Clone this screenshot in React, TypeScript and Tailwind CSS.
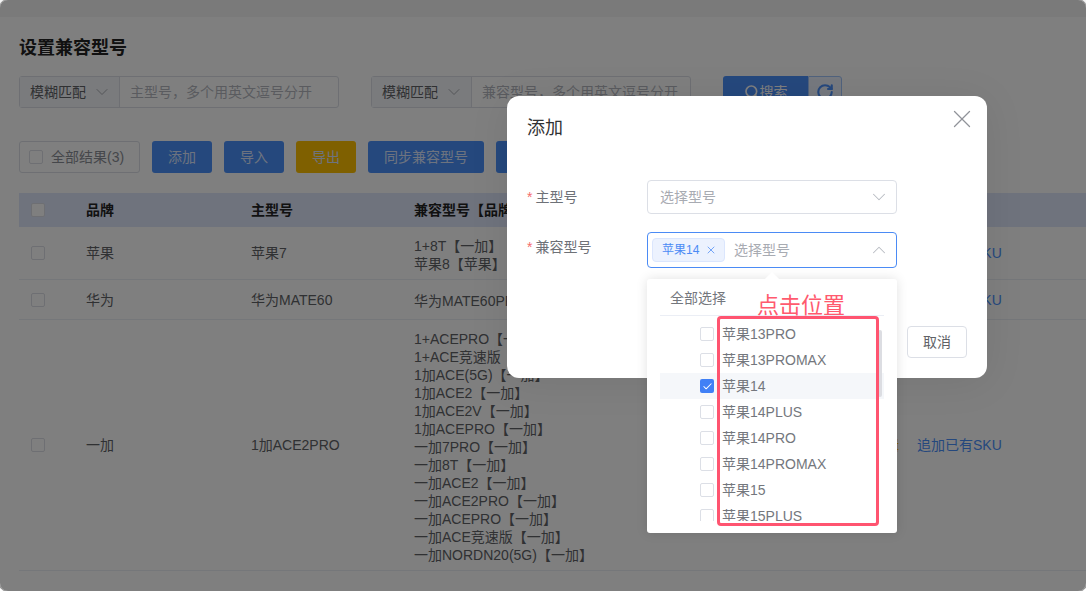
import React from "react";
import { ChevronDown, ChevronUp, X, Search, RotateCw, Check } from "lucide-react";

const rows = [
  { brand: "苹果", main: "苹果7", compat: ["1+8T【一加】", "苹果8【苹果】"], h: "h-[53px]" },
  { brand: "华为", main: "华为MATE60", compat: ["华为MATE60PRO【华为】"], h: "h-[40px]" },
  {
    brand: "一加",
    main: "1加ACE2PRO",
    compat: [
      "1+ACEPRO【一加】",
      "1+ACE竞速版【一加】",
      "1加ACE(5G)【一加】",
      "1加ACE2【一加】",
      "1加ACE2V【一加】",
      "1加ACEPRO【一加】",
      "一加7PRO【一加】",
      "一加8T【一加】",
      "一加ACE2【一加】",
      "一加ACE2PRO【一加】",
      "一加ACEPRO【一加】",
      "一加ACE竞速版【一加】",
      "一加NORDN20(5G)【一加】",
    ],
    h: "h-[251px]",
  },
];

const options = ["苹果13PRO", "苹果13PROMAX", "苹果14", "苹果14PLUS", "苹果14PRO", "苹果14PROMAX", "苹果15", "苹果15PLUS"];

function Box({ className = "" }: { className?: string }) {
  return <span className={`block w-[14px] h-[14px] shrink-0 rounded-[2px] border border-[#dcdfe6] bg-white ${className}`} />;
}

function MatchFilter({ placeholder }: { placeholder: string }) {
  return (
    <div className="flex h-8 w-[320px] rounded-[3px] border border-[#dcdfe6] text-sm">
      <div className="flex w-[100px] shrink-0 items-center justify-between border-r border-[#dcdfe6] bg-[#f5f7fa] pl-[10px] pr-[7px] text-[#606266]">
        模糊匹配
        <ChevronDown size={20} strokeWidth={1.2} className="text-[#a8abb2]" />
      </div>
      <div className="flex flex-1 items-center overflow-hidden whitespace-nowrap pl-[10px] text-[#b4b7bf]">{placeholder}</div>
    </div>
  );
}

function ToolButton({ label, color = "bg-[#4b90fb]", width }: { label: string; color?: string; width: string }) {
  return <button className={`flex h-8 items-center justify-center rounded-[3px] text-sm text-[#dbe7ff] ${color} ${width}`}>{label}</button>;
}

export default function App() {
  return (
    <div
      className="relative h-[591px] w-[1086px] overflow-hidden bg-white text-sm text-[#606266]"
      style={{ fontFamily: '"Liberation Sans", "Noto Sans CJK SC", sans-serif' }}
    >
      {/* Page behind the dialog */}
      <div className="h-[17px] bg-[#f4f4f4]" />
      <div className="pl-[19px]">
        <h1 className="mt-[20px] h-[22px] text-lg leading-[22px] font-bold text-[#222]">设置兼容型号</h1>
        <div className="mt-[17px] flex items-start">
          <MatchFilter placeholder="主型号，多个用英文逗号分开" />
          <div className="ml-8">
            <MatchFilter placeholder="兼容型号，多个用英文逗号分开" />
          </div>
          <div className="ml-8 flex h-8">
            <button className="flex w-[85px] items-center justify-center rounded-l-[3px] bg-[#4b90fb] text-sm text-white">
              <Search size={16} strokeWidth={2.5} />
              搜索
            </button>
            <button className="flex w-[34px] items-center justify-center rounded-r-[3px] border border-[#a0c4fb] bg-[#ecf3ff] text-[#4b90fb]">
              <RotateCw size={18} strokeWidth={2.8} />
            </button>
          </div>
        </div>
        <div className="mt-[33px] flex gap-3">
          <div className="flex h-8 w-[121px] items-center gap-2 rounded-[3px] border border-[#dcdfe6] pl-[9px] text-sm text-[#8b8e96]">
            <Box />
            全部结果(3)
          </div>
          <ToolButton label="添加" width="w-[60px]" />
          <ToolButton label="导入" width="w-[60px]" />
          <ToolButton label="导出" width="w-[60px]" color="bg-[#ffc000]" />
          <ToolButton label="同步兼容型号" width="w-[116px]" />
          <ToolButton label="批量删除" width="w-[90px]" />
        </div>

        <div className="mt-5">
          <div className="flex h-[34px] items-center bg-[#dfe6fa] font-bold text-[#222]">
            <div className="w-[67px] pl-3">
              <Box />
            </div>
            <div className="w-[165px]">品牌</div>
            <div className="w-[163px]">主型号</div>
            <div>兼容型号【品牌】</div>
          </div>
          {rows.map((row) => (
            <div key={row.brand} className={`flex items-center border-b border-[#ebeef5] ${row.h}`}>
              <div className="w-[67px] pl-3">
                <Box />
              </div>
              <div className="w-[165px]">{row.brand}</div>
              <div className="w-[163px]">{row.main}</div>
              <div className="w-[457px] pt-[3px] leading-[18px]">
                {row.compat.map((line) => (
                  <div key={line}>{line}</div>
                ))}
              </div>
              <div className="flex gap-[18px] whitespace-nowrap">
                <span className="text-[#ffc000]">编辑</span>
                <span className="text-[#4b90fb]">追加已有SKU</span>
              </div>
            </div>
          ))}
        </div>
      </div>

      {/* Overlay */}
      <div className="absolute inset-0 rounded-lg bg-black/50 ring-1 ring-[#9a9a9a]" />

      {/* Dialog */}
      <div className="absolute left-[507px] top-[96px] h-[282px] w-[480px] rounded-xl bg-white shadow-[0_4px_40px_rgba(0,0,0,0.08)]">
        <div className="flex items-start justify-between pl-5 pr-[10px] pt-[16px]">
          <h2 className="text-lg leading-[32px] text-[#303133]">添加</h2>
          <X size={30} strokeWidth={1} className="-mt-[8px] text-[#909399]" />
        </div>
        <div className="mt-[36px] flex flex-col gap-[18px] pl-5">
          <div className="flex h-[34px] items-center">
            <label className="w-[120px] text-[#6e7177]">
              <span className="mr-[3px] text-[#f56c6c]">*</span>主型号
            </label>
            <div className="flex h-[34px] w-[250px] items-center justify-between rounded border border-[#dcdfe6] pl-3 pr-[6px] text-[#a8abb2]">
              选择型号
              <ChevronDown size={22} strokeWidth={1.1} className="text-[#b8bbc2]" />
            </div>
          </div>
          <div className="flex items-start">
            <label className="w-[120px] pt-[5px] text-[#6e7177]">
              <span className="mr-[3px] text-[#f56c6c]">*</span>兼容型号
            </label>
            <div className="flex h-9 w-[250px] items-center rounded border border-[#4b8bf5] pl-[4px] pr-[6px] text-[#a8abb2]">
              <span className="flex h-6 w-[73px] items-center gap-[6px] rounded border border-[#dbe6fd] bg-[#ecf2fe] pl-[9px] text-xs text-[#4b8bf5]">
                苹果14
                <X size={12} strokeWidth={1.5} />
              </span>
              <span className="ml-[9px] flex-1">选择型号</span>
              <ChevronUp size={22} strokeWidth={1.1} className="text-[#b8bbc2]" />
            </div>
          </div>
        </div>
        <button className="absolute right-5 top-[230px] h-8 w-[60px] rounded border border-[#dcdfe6] bg-white text-sm text-[#606266]">取消</button>
      </div>

      {/* Dropdown */}
      <div className="absolute left-[647px] top-[279px] h-[254px] w-[250px] rounded-[3px] bg-white pl-[13px] pr-[13px] text-[#74777d] shadow-[0_0_12px_rgba(0,0,0,0.12)]">
        <span className="absolute -top-[5px] left-[120px] h-[10px] w-[10px] rotate-45 bg-white" />
        <div className="relative h-[37px] border-b border-[#ebeef5] pl-[10px] pt-[10px] leading-[18px]">全部选择</div>
        <div className="relative mt-[5px] h-[200px] overflow-hidden">
          {options.map((opt) => {
            const on = opt === "苹果14";
            return (
              <div key={opt} className={`flex h-[26px] items-center gap-2 pl-[40px] ${on ? "bg-[#f5f7fa]" : ""}`}>
                {on ? (
                  <span className="flex h-[14px] w-[14px] items-center justify-center rounded-[2px] bg-[#4080f6] text-white">
                    <Check size={11} strokeWidth={2.2} />
                  </span>
                ) : (
                  <Box />
                )}
                {opt}
              </div>
            );
          })}
          <span className="absolute right-[2px] top-[9px] h-[67px] w-[4px] rounded bg-[#dcdde2]" />
        </div>
      </div>

      {/* Annotation */}
      <div className="absolute left-[717px] top-[316px] h-[210px] w-[162px] rounded-[4px] border-[3px] border-[#ff5470]" />
      <div className="absolute left-[757px] top-[292px] text-[22px] leading-[28px] text-[#ff5a6e]">点击位置</div>
    </div>
  );
}
